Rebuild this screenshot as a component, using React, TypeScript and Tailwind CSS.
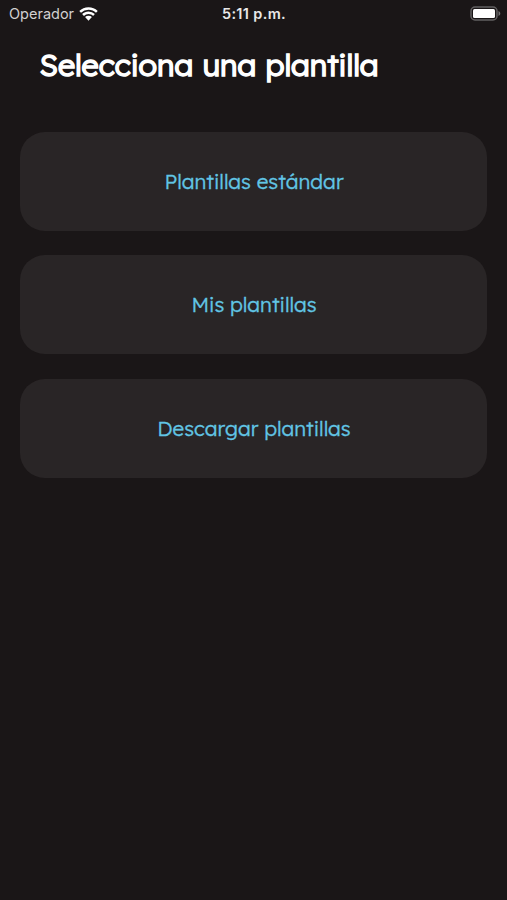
const OPTIONS = ["Plantillas estándar", "Mis plantillas", "Descargar plantillas"];

function WifiIcon() {
  return (
    <svg width="19" height="14" viewBox="0 0 20 14" fill="#fff">
      <path d="M10 0C6.200 0 2.800 1.500.3 3.900l1.800 1.900A11.300 11.300 0 0 1 10 2.600c3.100 0 5.900 1.200 7.900 3.200l1.800-1.900A14 14 0 0 0 10 0Z" />
      <path d="M10 4.400c-2.600 0-4.900 1-6.700 2.700l1.900 1.900A6.900 6.900 0 0 1 10 7c1.900 0 3.600.8 4.800 2l1.900-1.900A9.600 9.600 0 0 0 10 4.400Z" />
      <path d="M10 8.800c-1.400 0-2.600.5-3.600 1.400L10 14l3.600-3.800A5.200 5.200 0 0 0 10 8.800Z" />
    </svg>
  );
}

function BatteryIcon() {
  return (
    <svg width="31" height="15" viewBox="0 0 31 15" fill="none">
      <rect x="1" y="1" width="26" height="13" rx="4" stroke="#626061" strokeWidth="1.500" />
      <rect x="3" y="3" width="22" height="9" rx="1.500" fill="#fff" />
      <path d="M28.500 5v5c1-.4 1.800-1.400 1.800-2.500S29.500 5.400 28.500 5Z" fill="#757374" />
    </svg>
  );
}

export default function App() {
  return (
    <main className="h-[900px] w-[507px] overflow-hidden bg-[#1a1617] font-['Lexend','Open_Sans',sans-serif]">
      <header className="grid h-[27px] grid-cols-3 items-center pl-[9px] pr-1.5 font-['Inter',sans-serif] text-[14.5px] text-[#e8e8e8]">
        <div className="flex items-center gap-[5px]">
          <span className="pt-px text-[#d2d0d1]">Operador</span>
          <WifiIcon />
        </div>
        <span className="pt-px pr-0.5 text-center font-semibold tracking-[0.35px]">5:11 p.m.</span>
        <div className="flex justify-end">
          <BatteryIcon />
        </div>
      </header>
      <h1 className="mt-[18px] ml-[39.5px] h-10 text-[30.4px] leading-10 font-light text-white [-webkit-text-stroke:1.5px_white] [word-spacing:0.6px]">
        Selecciona una plantilla
      </h1>
      <div className="mt-[47px] flex flex-col gap-[24.4px] px-5">
        {OPTIONS.map((label) => (
          <button
            key={label}
            className="h-[99px] rounded-[25px] bg-[#292526] pl-px text-[20.6px] font-light text-[#61c5e5] [-webkit-text-stroke:0.3px_#61c5e5]"
          >
            {label}
          </button>
        ))}
      </div>
    </main>
  );
}
